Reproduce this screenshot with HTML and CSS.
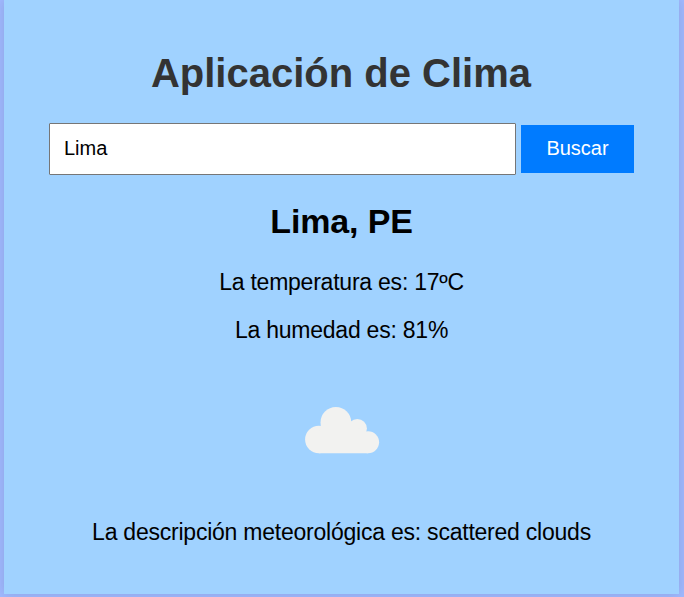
FILE: index.html
```html
<!DOCTYPE html>
<html lang="es">
<head>
<meta charset="utf-8">
<title>Aplicación de Clima</title>
<link rel="stylesheet" href="styles.css">
</head>
<body>
<main class="container">
  <h1>Aplicación de Clima</h1>
  <form class="search">
    <input type="text" value="Lima" aria-label="Ciudad">
    <button type="button">Buscar</button>
  </form>
  <section class="weather">
    <h2>Lima, PE</h2>
    <p>La temperatura es: 17ºC</p>
    <p>La humedad es: 81%</p>
    <svg class="icon" viewBox="0 0 75 48" aria-hidden="true">
      <circle cx="14.9" cy="33.5" r="13.8"/>
      <circle cx="31.9" cy="16.4" r="15.4"/>
      <circle cx="53.3" cy="22.6" r="9.6"/>
      <circle cx="64.1" cy="36.3" r="11"/>
      <path d="M14.9 47.3V25L22 20H50L61.5 26L64.1 30V47.3Z"/>
    </svg>
    <p class="description">La descripción meteorológica es: scattered clouds</p>
  </section>
</main>
</body>
</html>
```
FILE: styles.css
```css
* { box-sizing: border-box; }
html, body { height: 100%; overflow: hidden; }
body {
  margin: 0;
  padding: 0 5px 3px 4px;
  background: #a0b9ff;
  font-family: "Liberation Sans", Arial, sans-serif;
}
.container {
  height: 594px;
  padding: 50px 45px 0;
  background: #a0d2ff;
  box-shadow: 0 0 12px rgba(0, 0, 0, 0.12);
  text-align: center;
}
h1 { margin: 0 1px 0 0; font-size: 40px; line-height: 46px; color: #333; }
.search {
  display: flex;
  align-items: center;
  gap: 5px;
  margin-top: 27px;
}
input {
  width: 467px;
  height: 52px;
  padding: 0 14px 2px;
  border: 1px solid #767676;
  border-radius: 1px;
  background: #fff;
  color: #000;
  font: 20px "Liberation Sans", Arial, sans-serif;
}
button {
  width: 113px;
  height: 48px;
  padding: 0 0 2px;
  border: 0;
  background: #007bff;
  color: #fff;
  font: 20px "Liberation Sans", Arial, sans-serif;
}
h2 { margin: 26px 0 0; font-size: 34px; line-height: 40px; letter-spacing: -0.15px; }
p { margin: 0; font-size: 23px; line-height: 26px; letter-spacing: -0.23px; }
h2 + p { margin-top: 28px; }
p + p { margin-top: 22px; }
.icon {
  display: block;
  width: 75px;
  height: 48px;
  margin: 63px auto 65px;
  overflow: visible;
  fill: #f2f2f0;
}
```
